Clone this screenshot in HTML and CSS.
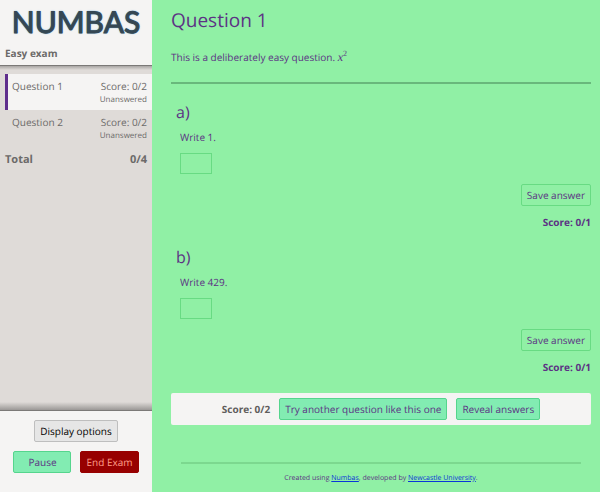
FILE: index.html
```
<!DOCTYPE html>
<html lang="en">
<head>
    <meta charset="UTF-8">
    <meta name="viewport" content="width=device-width, initial-scale=1.0">
    <title>Easy exam</title>
    <link rel="stylesheet" href="styles.css">
</head>
<body>

    <div class="exam">
        <!-- sidebar -->
        <nav class="sidebar">
            <header class="banner">
                <div class="logo">NUMBAS</div>
                <h2 class="exam-name">Easy exam</h2>
            </header>

            <div class="questions">
                <ul class="question-list">
                    <li>
                        <a href="#question-1" class="question-link current">
                            <span>Question 1</span>
                            <span class="result">Score: 0/2<small>Unanswered</small></span>
                        </a>
                    </li>
                    <li>
                        <a href="#question-2" class="question-link">
                            <span>Question 2</span>
                            <span class="result">Score: 0/2<small>Unanswered</small></span>
                        </a>
                    </li>
                </ul>
                <div class="total"><span>Total</span><span>0/4</span></div>
            </div>

            <div class="controls">
                <button type="button" class="btn btn-plain">Display options</button>
                <div class="control-row">
                    <button type="button" class="btn btn-primary">Pause</button>
                    <button type="button" class="btn btn-danger">End Exam</button>
                </div>
            </div>
        </nav>

        <!-- question -->
        <main class="main" id="question-1">
            <h1>Question 1</h1>
            <p class="statement">This is a deliberately easy question. <span class="math"><i>x</i><sup>2</sup></span></p>
            <hr>

            <section class="part">
                <h3>a)</h3>
                <div class="prompt">
                    <label for="answer-a">Write 1.</label>
                    <input type="text" id="answer-a">
                </div>
                <div class="feedback">
                    <button type="button" class="btn">Save answer</button>
                    <strong>Score: 0/1</strong>
                </div>
            </section>

            <section class="part">
                <h3>b)</h3>
                <div class="prompt">
                    <label for="answer-b">Write 429.</label>
                    <input type="text" id="answer-b">
                </div>
                <div class="feedback">
                    <button type="button" class="btn">Save answer</button>
                    <strong>Score: 0/1</strong>
                </div>
            </section>

            <div class="question-bar">
                <strong>Score: 0/2</strong>
                <button type="button" class="btn btn-primary">Try another question like this one</button>
                <button type="button" class="btn btn-primary">Reveal answers</button>
            </div>

            <footer>
                Created using <a href="#numbas">Numbas</a>, developed by <a href="#newcastle">Newcastle University</a>.
            </footer>
        </main>
    </div>

</body>
</html>
```
FILE: styles.css
```
* {
    box-sizing: border-box;
}
body {
    margin: 0;
    font-family: "Open Sans", "Noto Sans", sans-serif;
    font-size: 10px;
    line-height: 14px;
    color: #5c3384;
    background: #90f0a5;
    text-rendering: geometricPrecision;
}
.exam {
    display: grid;
    grid-template-columns: 152px 1fr;
    min-height: 100vh;
}

/* sidebar */
.sidebar {
    display: flex;
    flex-direction: column;
    background: #dfdbd8;
    color: #6c6a69;
}
.banner {
    padding: 0 5px;
    height: 66px;
    background: #f5f4f3;
    border-bottom: 1px solid #7b7977;
}
.logo {
    font-family: Lato, sans-serif;
    font-size: 30px;
    line-height: 44px;
    text-align: center;
    color: #354753;
    -webkit-text-stroke: 1px #354753;
    text-shadow: 0 0 2px #72b5df, 0 0 1px #72b5df, 0 0 1px #72b5df;
}
.exam-name {
    margin: 2px 0 0;
    font-size: 10px;
    line-height: 14px;
}
.questions {
    flex: 1;
    padding-top: 8px;
    background:
        linear-gradient(#a9a6a4, transparent) top / 100% 4px no-repeat,
        linear-gradient(transparent, #9b9896) bottom / 100% 8px no-repeat;
}
.question-list {
    margin: 0;
    padding: 0 0 0 5px;
    list-style: none;
}
.question-link {
    display: flex;
    justify-content: space-between;
    padding: 5px 5px 4px 4px;
    border-left: 3px solid transparent;
    color: inherit;
    text-decoration: none;
}
.question-link.current {
    border-left-color: #5f2e8c;
    background: #f5f4f3;
}
.result {
    text-align: right;
}
.result small {
    display: block;
    font-size: 8px;
    line-height: 13px;
}
.total {
    display: flex;
    justify-content: space-between;
    padding: 6px 5px;
    font-size: 11px;
    line-height: 16px;
    font-weight: bold;
}
.controls {
    display: flex;
    flex-direction: column;
    align-items: center;
    gap: 9px;
    padding: 9px 5px 19px;
    border-top: 1px solid #7b7977;
    background: #f5f4f3;
}
.control-row {
    display: flex;
    gap: 9px;
}
.control-row .btn {
    min-width: 58px;
}

/* buttons */
.btn {
    padding: 3px 5px;
    border: 1px solid #68db83;
    border-radius: 2px;
    font: inherit;
    color: #5c3384;
    line-height: 14px;
    height: 22px;
    background: transparent;
    text-rendering: inherit;
    cursor: pointer;
}
.btn-plain {
    border-color: #bebebe;
    background: #e6e6e6;
    color: #000;
}
.btn-primary {
    border-color: #55d58d;
    background: #82ecb2;
}
.btn-danger {
    border-color: #970000;
    background: #970000;
    color: #ff9d88;
}

/* question */
.main {
    padding: 0 9px 0 19px;
}
h1 {
    margin: 6px 0 16px;
    font-size: 19px;
    line-height: 28px;
    font-weight: normal;
}
.statement {
    margin: 0 0 18px;
    height: 14px;
    line-height: 14px;
}
.math {
    font-family: "Liberation Serif", serif;
    font-size: 12px;
    line-height: 0;
}
.math sup {
    font-size: 8px;
    line-height: 0;
}
hr {
    margin: 0;
    border: 0;
    border-top: 2px solid #69b87c;
}
.part {
    padding: 16px 0 0 5px;
}
h3 {
    margin: 0;
    font-size: 16px;
    line-height: 24px;
    font-weight: normal;
}
.prompt {
    display: flex;
    flex-direction: column;
    align-items: flex-start;
    gap: 9px;
    padding: 6px 4px 10px;
}
.prompt input {
    width: 32px;
    height: 21px;
    padding: 2px 4px;
    border: 1px solid #68db83;
    font: inherit;
    color: inherit;
    background: transparent;
}
.feedback {
    display: flex;
    flex-direction: column;
    align-items: flex-end;
    gap: 9px;
}
.question-bar {
    display: flex;
    justify-content: center;
    align-items: center;
    gap: 9px;
    margin-top: 19px;
    padding: 5px;
    border-radius: 2px;
    background: #f5f4f3;
}
.question-bar strong {
    color: #5f5d5c;
}
footer {
    margin: 37px 10px 0;
    padding-top: 9px;
    border-top: 2px solid #7cd88f;
    font-size: 7px;
    line-height: 12px;
    text-align: center;
}
footer a {
    color: #0a35d8;
}
```
